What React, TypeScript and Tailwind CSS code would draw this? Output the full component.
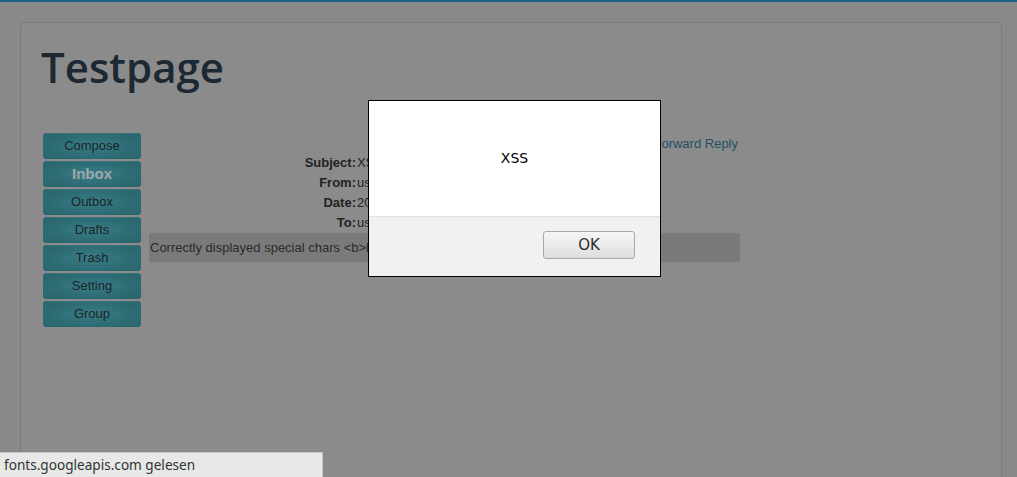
import React from 'react';

const navItems = ['Compose', 'Inbox', 'Outbox', 'Drafts', 'Trash', 'Setting', 'Group'];

const headerRows: [string, string][] = [
  ['Subject:', 'XSS'],
  ['From:', 'user'],
  ['Date:', '2015'],
  ['To:', 'user'],
];

export default function App(): React.JSX.Element {
  return (
    <div
      className="relative w-[1017px] h-[477px] overflow-hidden bg-[#898989] border-t-2 border-[#1d5f80]"
      style={{ fontFamily: '"Liberation Sans", Arial, sans-serif' }}
    >
      {/* Page card */}
      <div className="ml-[20px] mt-[20px] w-[982px] h-[470px] rounded-[4px] border border-[#7b7b7b] bg-[#8b8b8b] pl-[20px] pt-[16px]">
        <h1
          className="text-[42px] leading-[56px] font-semibold text-[#1c2833]"
          style={{ fontFamily: '"Open Sans", sans-serif' }}
        >
          Testpage
        </h1>

        <div className="flex mt-[38px]">
          {/* Sidebar */}
          <nav className="flex flex-col gap-[2px] ml-[2px] w-[98px]">
            {navItems.map((item) => (
              <div
                key={item}
                className={`h-[26px] rounded-[3px] flex items-center justify-center bg-[radial-gradient(ellipse_at_center,#387d87_0%,#2e6d76_55%,#29636b_100%)] shadow-[inset_0_1px_0_rgba(255,255,255,0.08)] ${
                  item === 'Inbox'
                    ? 'text-[15px] font-bold text-[#a0a7a9]'
                    : 'text-[13px] text-[#1c2427]'
                }`}
              >
                {item}
              </div>
            ))}
          </nav>

          {/* Message view */}
          <div className="ml-[8px] w-[591px] flex flex-col">
            <div className="flex justify-end pr-[2px] h-[17px] text-[13px] text-[#1f4f68] mt-[1px]">
              <span>Forward Reply</span>
            </div>
            <div className="flex flex-col mt-[2px]">
              {headerRows.map(([label, value]) => (
                <div key={label} className="flex h-[20px] items-center text-[13px] text-[#222]">
                  <span className="w-[207px] text-right font-bold">{label}</span>
                  <span className="pl-[1px]">{value}</span>
                </div>
              ))}
            </div>
            <div className="h-[29px] bg-[#7a7a7a] flex items-center pl-[1px] text-[13px] text-[#2a2a2a]">
              Correctly displayed special chars &lt;b&gt;bold&lt;/b&gt;
            </div>
          </div>
        </div>
      </div>

      {/* Alert dialog */}
      <div
        className="absolute left-[368px] top-[98px] w-[293px] h-[177px] border border-black bg-white flex flex-col"
        style={{ fontFamily: '"DejaVu Sans", sans-serif' }}
      >
        <div className="h-[115px] flex items-center justify-center text-[14px] text-black pb-[1px]">
          XSS
        </div>
        <div className="flex-1 bg-[#f1f1f1] border-t border-[#e2e2e2] flex justify-end items-start pt-[14px] pr-[25px]">
          <button className="w-[92px] h-[28px] rounded-[3px] border border-[#a9a9a9] bg-[linear-gradient(#f6f6f6,#dedede)] text-[15px] text-[#2e2e2e]">
            OK
          </button>
        </div>
      </div>

      {/* Status bar */}
      <div
        className="absolute left-0 bottom-0 w-[323px] h-[25px] bg-[#e8e8e6] border-t border-r border-[#c9c9c7] flex items-center pl-[4px] text-[13.6px] text-[#2e3436]"
        style={{ fontFamily: '"Noto Sans", sans-serif' }}
      >
        fonts.googleapis.com gelesen
      </div>
    </div>
  );
}
